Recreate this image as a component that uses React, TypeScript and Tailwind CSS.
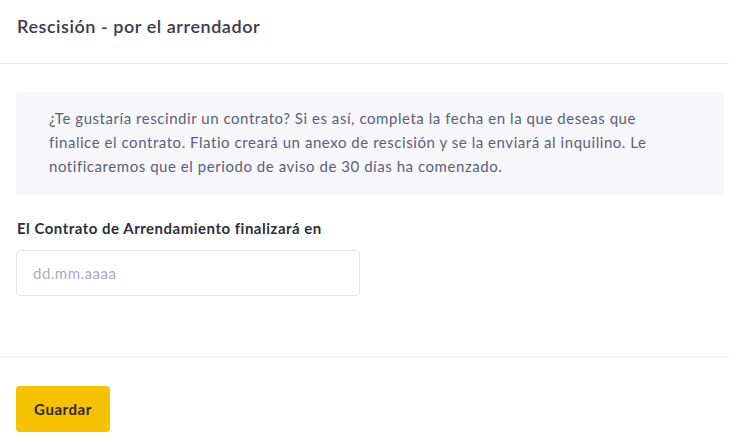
export default function App() {
  return (
    <div className="h-[442px] w-[729px] bg-white font-['Lato',sans-serif] text-[#3b3a4f]">
      {/* Header */}
      <div className="h-[64px] border-b border-[#e8e8ec] px-[17px] pt-[15px]">
        <h1 className="text-[18px] font-semibold leading-[22px] tracking-[0.55px] text-[#3b3a4f]">
          Rescisión - por el arrendador
        </h1>
      </div>

      {/* Body */}
      <div className="h-[293px] border-b border-[#e8e8ec] pt-[28px]">
        <div className="ml-[16px] mr-[5px] rounded-[4px] bg-[#f7f7f9] pb-[17px] pl-[33px] pr-[40px] pt-[14px]">
          <p className="text-[15px] leading-[24px] tracking-[0.55px] text-[#5b5f7d]">
            ¿Te gustaría rescindir un contrato? Si es así, completa la fecha en la que deseas que finalice el
            contrato. Flatio creará un anexo de rescisión y se la enviará al inquilino. Le notificaremos que el
            periodo de aviso de 30 días ha comenzado.
          </p>
        </div>

        <div className="px-[17px] pt-[24px]">
          <label className="block text-[15px] font-bold leading-[18px] tracking-[0.5px] text-[#2f2e40]">
            El Contrato de Arrendamiento finalizará en
          </label>
          <input
            type="text"
            placeholder="dd.mm.aaaa"
            className="-ml-px mt-[13px] h-[46px] w-[344px] rounded-[4px] border border-[#e3e3e8] px-[16px] text-[15px] tracking-[0.5px] text-[#3b3a4f] outline-none placeholder:text-[#a9acc4]"
          />
        </div>
      </div>

      {/* Footer */}
      <div className="px-[16px] pt-[29px]">
        <button className="h-[46px] w-[94px] rounded-[4px] bg-[#f6c200] text-[15px] font-bold tracking-[0.55px] text-[#2b2a2e]">
          Guardar
        </button>
      </div>
    </div>
  );
}
